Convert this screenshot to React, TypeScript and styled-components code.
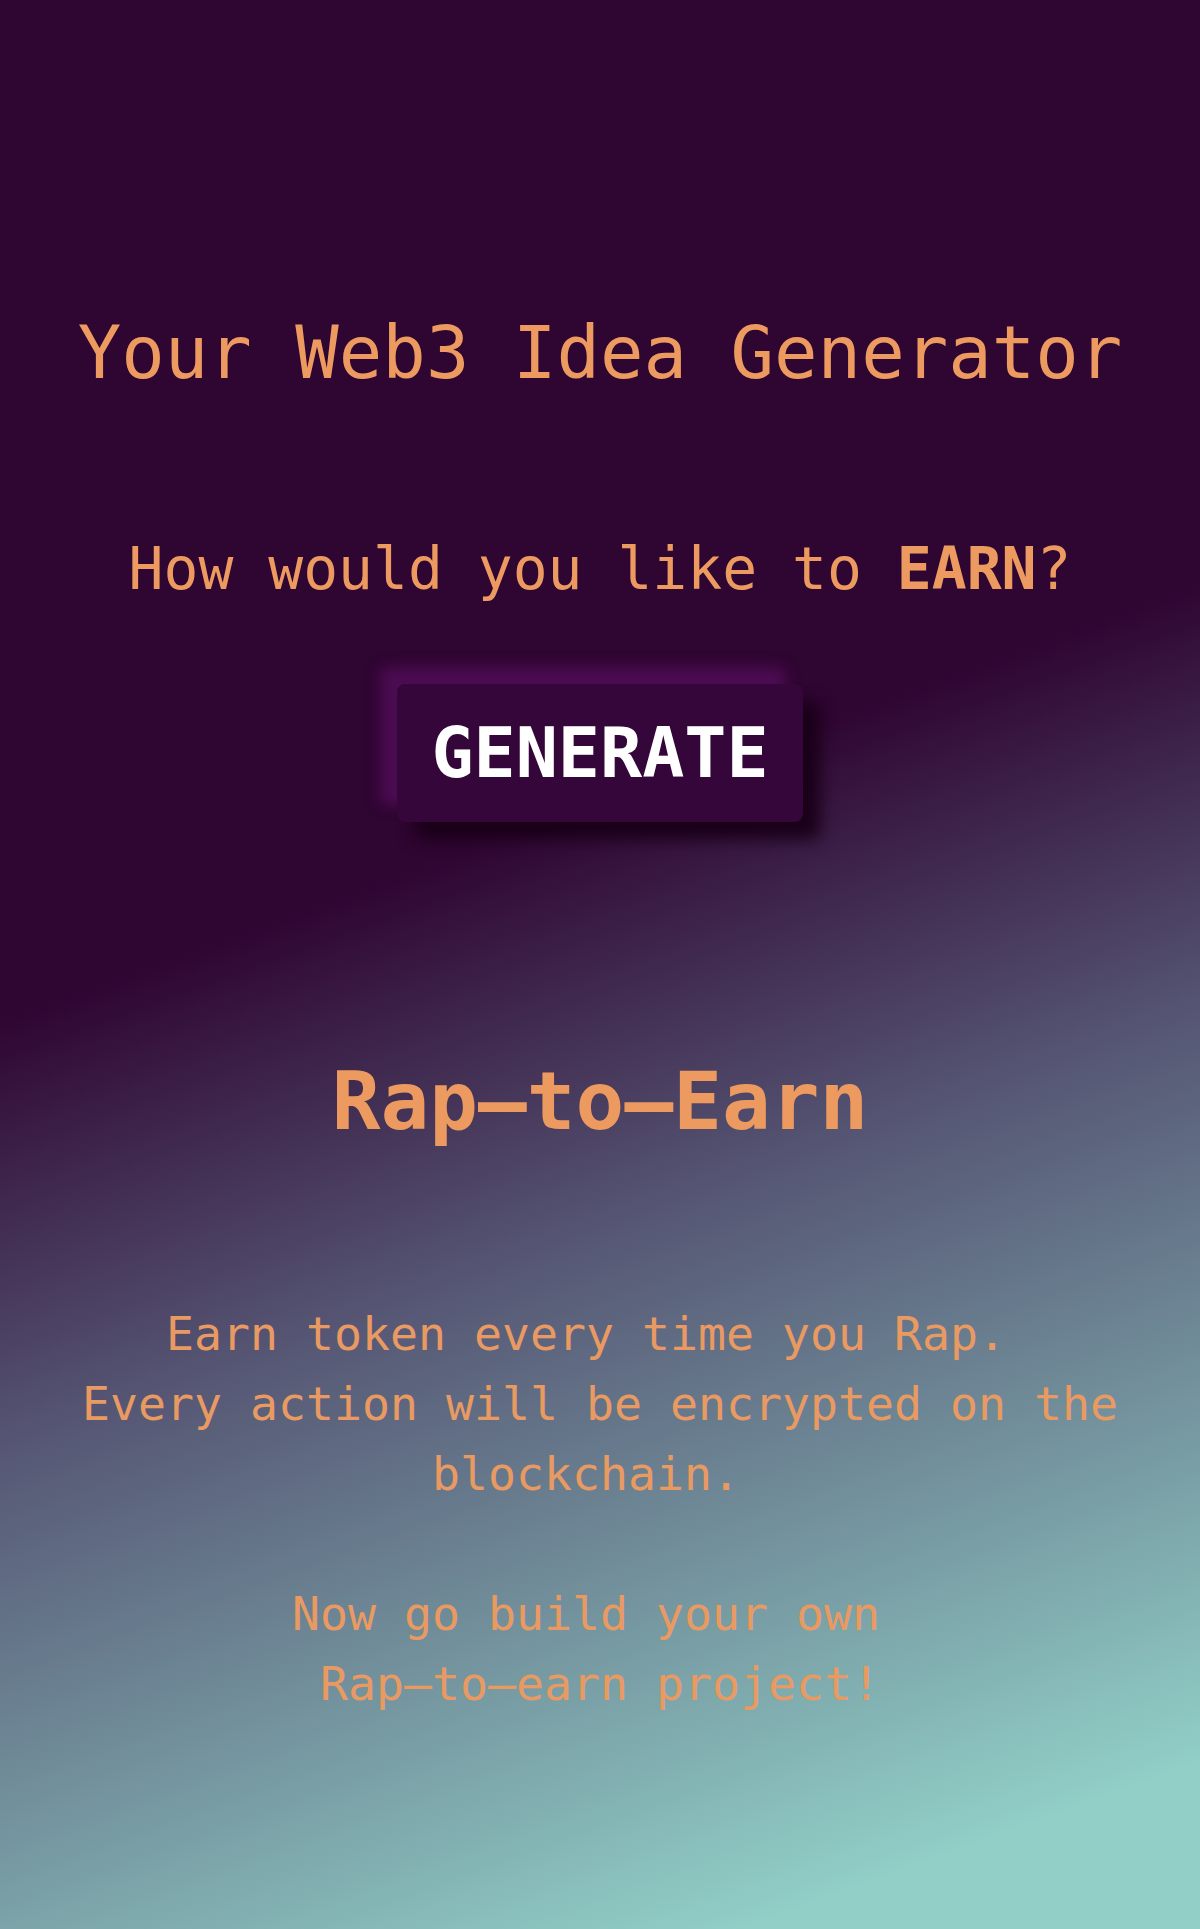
import React from "react";
import styled, { createGlobalStyle } from "styled-components";

const GlobalStyle = createGlobalStyle`
  html, body {
    margin: 0;
    padding: 0;
  }
  body {
    font-family: "DejaVu Sans Mono", "Liberation Mono", monospace;
    background: #2f0532;
  }
  * { box-sizing: border-box; }
`;

const Page = styled.main`
  min-height: 100vh;
  width: 100%;
  display: flex;
  flex-direction: column;
  align-items: center;
  padding-top: 310px;
  padding-bottom: 120px;
  background: linear-gradient(160deg, #2f0532 43%, #555573 61%, #91cfc7 93%);
  color: #ec9a5f;
  text-align: center;
`;

const Title = styled.h1`
  margin: 0;
  font-size: 72.3px;
  line-height: 86px;
  font-weight: 400;
`;

const Prompt = styled.p`
  margin: 138px 0 0;
  font-size: 58px;
  line-height: 70px;
  font-weight: 400;

  strong {
    font-weight: 700;
  }
`;

const GenerateButton = styled.button`
  margin-top: 80px;
  padding: 28px 34px;
  border: none;
  border-radius: 8px;
  background: #34063a;
  color: #ffffff;
  font-family: "DejaVu Sans Mono", "Liberation Mono", monospace;
  font-size: 70px;
  font-weight: 700;
  line-height: 82px;
  cursor: pointer;
  box-shadow: -17px -17px 14px #4c0c52, 17px 17px 16px #1a0019;
`;

const IdeaTitle = styled.h2`
  margin: 232px 0 0;
  font-size: 81px;
  line-height: 94px;
  font-weight: 700;
`;

const Description = styled.p<{ $gap: number }>`
  margin: ${(p) => p.$gap}px 0 0;
  font-size: 46.5px;
  line-height: 70px;
  font-weight: 400;
  color: #e99a62;
`;

export default function App() {
  return (
    <>
      <GlobalStyle />
      <Page>
        <Title>Your Web3 Idea Generator</Title>
        <Prompt>
          How would you like to <strong>EARN</strong>?
        </Prompt>
        <GenerateButton type="button">GENERATE</GenerateButton>
        <IdeaTitle>Rap–to–Earn</IdeaTitle>
        <Description $gap={151}>
          Earn token every time you Rap.{"\u00A0"}
          <br />
          Every action will be encrypted on the blockchain.{"\u00A0"}
        </Description>
        <Description $gap={70}>
          Now go build your own{"\u00A0"}
          <br />
          Rap–to–earn project!
        </Description>
      </Page>
    </>
  );
}
